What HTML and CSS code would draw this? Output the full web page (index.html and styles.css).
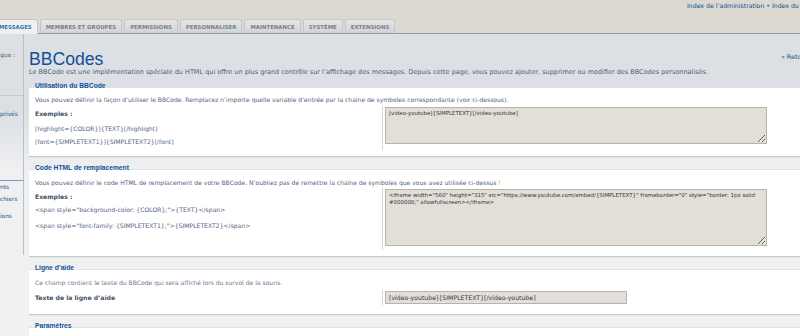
FILE: index.html
```html
<!DOCTYPE html>
<html lang="fr">
<head>
    <meta charset="UTF-8">
    <meta name="viewport" content="width=device-width, initial-scale=1.0">
    <title>BBCodes - Panneau d'administration</title>
    <link rel="stylesheet" href="styles.css">
</head>
<body>
<div class="page">
    <div class="header">
        <div class="crumbs"><a href="#">Index de l’administration</a> • <a href="#">Index du forum</a></div>
        <ul class="tabs">
            <li class="tab active">Messages</li>
            <li class="tab">Membres et groupes</li>
            <li class="tab">Permissions</li>
            <li class="tab">Personnaliser</li>
            <li class="tab">Maintenance</li>
            <li class="tab">Système</li>
            <li class="tab">Extensions</li>
        </ul>
    </div>

    <div class="content">
        <div class="menu">
            <div class="menu-block block-one"><span class="menu-head">que :</span></div>
            <div class="menu-block block-two"><a href="#">privés</a></div>
            <div class="menu-block block-three">
                <a href="#">nts</a>
                <a href="#">chiers</a>
                <a href="#" class="gap">ions</a>
            </div>
        </div>

        <div class="main">
            <div class="title-row">
                <h1>BBCodes</h1>
                <a href="#" class="back">« Retour</a>
            </div>
            <p class="intro">Le BBCode est une implémentation spéciale du HTML qui offre un plus grand contrôle sur l’affichage des messages. Depuis cette page, vous pouvez ajouter, supprimer ou modifier des BBCodes personnalisés.</p>

            <fieldset class="f-usage">
                <legend>Utilisation du BBCode</legend>
                <p class="explain">Vous pouvez définir la façon d’utiliser le BBCode. Remplacez n’importe quelle variable d’entrée par la chaîne de symboles correspondante (voir ci-dessous).</p>
                <dl>
                    <dt>
                        <label>Exemples :</label>
                        <span class="sample">[highlight={COLOR}]{TEXT}[/highlight]</span>
                        <span class="sample">[font={SIMPLETEXT1}]{SIMPLETEXT2}[/font]</span>
                    </dt>
                    <dd><textarea class="short" readonly>[video-youtube]{SIMPLETEXT}[/video-youtube]</textarea></dd>
                </dl>
            </fieldset>

            <fieldset class="f-html">
                <legend>Code HTML de remplacement</legend>
                <p class="explain">Vous pouvez définir le code HTML de remplacement de votre BBCode. N’oubliez pas de remettre la chaîne de symboles que vous avez utilisée ci-dessus <span class="warn">!</span></p>
                <dl>
                    <dt>
                        <label>Exemples :</label>
                        <span class="sample">&lt;span style="background-color: {COLOR};"&gt;{TEXT}&lt;/span&gt;</span>
                        <span class="sample">&lt;span style="font-family: {SIMPLETEXT1};"&gt;{SIMPLETEXT2}&lt;/span&gt;</span>
                    </dt>
                    <dd><textarea class="tall" readonly>&lt;iframe width="560" height="315" src="https://www.youtube.com/embed/{SIMPLETEXT}" frameborder="0" style="border: 1px solid #000000;" allowfullscreen&gt;&lt;/iframe&gt;</textarea></dd>
                </dl>
            </fieldset>

            <fieldset class="f-help">
                <legend>Ligne d’aide</legend>
                <p class="explain light">Ce champ contient le texte du BBCode qui sera affiché lors du survol de la souris.</p>
                <dl>
                    <dt><label>Texte de la ligne d’aide</label></dt>
                    <dd><input type="text" value="[video-youtube]{SIMPLETEXT}[/video-youtube]" readonly></dd>
                </dl>
            </fieldset>

            <fieldset class="f-settings">
                <legend>Paramètres</legend>
            </fieldset>
        </div>
    </div>
</div>
</body>
</html>
```

FILE: styles.css
```css
body {
    margin: 0;
    overflow: hidden;
    font-family: "DejaVu Sans", Verdana, sans-serif;
    background: linear-gradient(to bottom, #dcdfe3 0, #dcdfe3 110px, #eef0f1 170px, #f1f1f1 336px);
    color: #536482;
}
a {
    color: #105289;
    text-decoration: none;
}
.page {
    width: 840px;
}

/* header with breadcrumbs and tabs */
.header {
    background-color: #dcd9d2;
    border-bottom: 1px solid #9a9a9a;
    height: 33px;
    display: flex;
    flex-direction: column;
}
.crumbs {
    height: 19px;
    box-sizing: border-box;
    padding: 1px 0 0 687px;
    font-size: 6.2px;
    line-height: 10px;
    white-space: nowrap;
    color: #105289;
}
.tabs {
    list-style: none;
    margin: 0 0 0 -7px;
    padding: 0;
    display: flex;
    gap: 2px;
    height: 14px;
}
.tab {
    padding: 0 5px;
    font-size: 5.4px;
    font-weight: bold;
    text-transform: uppercase;
    line-height: 14px;
    color: #7d7f82;
    background: linear-gradient(to bottom, #e6e8ea, #cfd3d7);
    border: 1px solid #c3c6ca;
    border-bottom: 0;
    border-radius: 3px 3px 0 0;
    box-sizing: border-box;
    white-space: nowrap;
}
.tab.active {
    background: #eef0f2;
    color: #3a73ad;
    height: 15px;
    margin-bottom: -1px;
}

/* page body */
.content {
    display: grid;
    grid-template-columns: 24px 1fr;
    column-gap: 5px;
}
.menu {
    height: 221px;
    border-right: 1px solid #b9c0c7;
    font-size: 5.8px;
    line-height: 10px;
    white-space: nowrap;
    overflow: hidden;
}
.menu-block {
    display: flex;
    flex-direction: column;
}
.block-one {
    height: 62px;
    padding-top: 16px;
    box-sizing: border-box;
    border-bottom: 1px solid #c3cad1;
    text-align: right;
    padding-right: 8px;
    color: #555;
}
.block-two {
    height: 85px;
    padding-top: 13px;
    box-sizing: border-box;
    border-bottom: 1px solid #7f9db9;
}
.block-three {
    line-height: 12px;
}
.block-three .gap {
    margin-top: 5px;
}

.main {
    padding-top: 15px;
    min-width: 0;
}
.title-row {
    display: flex;
    justify-content: space-between;
    align-items: center;
    padding-right: 32px;
}
h1 {
    margin: 0;
    font-family: "Liberation Sans", Arial, sans-serif;
    font-weight: normal;
    font-size: 17.6px;
    line-height: 20px;
    color: #115098;
}
.back {
    font-size: 6.4px;
    margin-top: -4px;
}
.intro {
    margin: -1px 0 0;
    font-size: 6.5px;
    line-height: 8px;
    color: #4c5d77;
    white-space: nowrap;
}

/* fieldsets */
fieldset {
    margin: 0 0 7px;
    padding: 0 6px 6px;
    border: 0;
    border-top: 1px solid #e2e2e2;
    border-bottom: 1px solid #c8c8c8;
    box-shadow: 0 1px 0 #e4e4e4;
    background-color: #fff;
    min-width: 0;
}
.f-usage {
    margin-top: 6px;
}
legend {
    padding: 0 0 2px;
    font-family: "Liberation Sans", Arial, sans-serif;
    font-weight: bold;
    font-size: 6.7px;
    line-height: 8px;
    color: #115098;
}
.explain {
    margin: 3px 0 0;
    font-size: 6.05px;
    line-height: 9px;
    white-space: nowrap;
}
.explain.light {
    color: #6b7b95;
}
.warn {
    color: #e3a21a;
}
dl {
    margin: 2px 0 0;
    display: grid;
    grid-template-columns: 347px 1fr;
}
dt {
    display: flex;
    flex-direction: column;
    padding-top: 3px;
    font-size: 6.1px;
    line-height: 10px;
}
dt label {
    font-weight: bold;
    color: #425067;
    margin-bottom: 5px;
}
dt .sample + .sample {
    margin-top: 3px;
}
dd {
    margin: 0;
    padding: 1px 0 6px 2px;
    border-left: 1px solid #d5d5d5;
}
textarea,
input {
    display: block;
    box-sizing: border-box;
    width: 382px;
    margin: 0;
    padding: 2px 3px;
    border: 1px solid #b7b4ae;
    background-color: #e3dfd8;
    font-family: "DejaVu Sans", Verdana, sans-serif;
    font-size: 5.45px;
    line-height: 7px;
    color: #333;
}
textarea.short {
    height: 37px;
}
textarea.tall {
    height: 57px;
}
.f-html .explain {
    margin-top: 4px;
}
.f-html dl {
    margin-top: 1px;
}
.f-html dt {
    padding-top: 4px;
}
.f-html dt label {
    margin-bottom: 3px;
}
.f-html dt .sample + .sample {
    margin-top: 6px;
}
.f-html dd {
    padding-bottom: 4px;
}
.f-help {
    padding-bottom: 9px;
}
.f-help .explain {
    margin-top: 4px;
}
.f-help dl {
    margin-top: 3px;
}
.f-help dt label {
    margin: 0;
}
.f-help dd {
    padding-bottom: 1px;
}
input {
    width: 242px;
    height: 13px;
    padding: 0 3px;
    font-size: 6.2px;
}
.f-settings {
    height: 30px;
}
```
